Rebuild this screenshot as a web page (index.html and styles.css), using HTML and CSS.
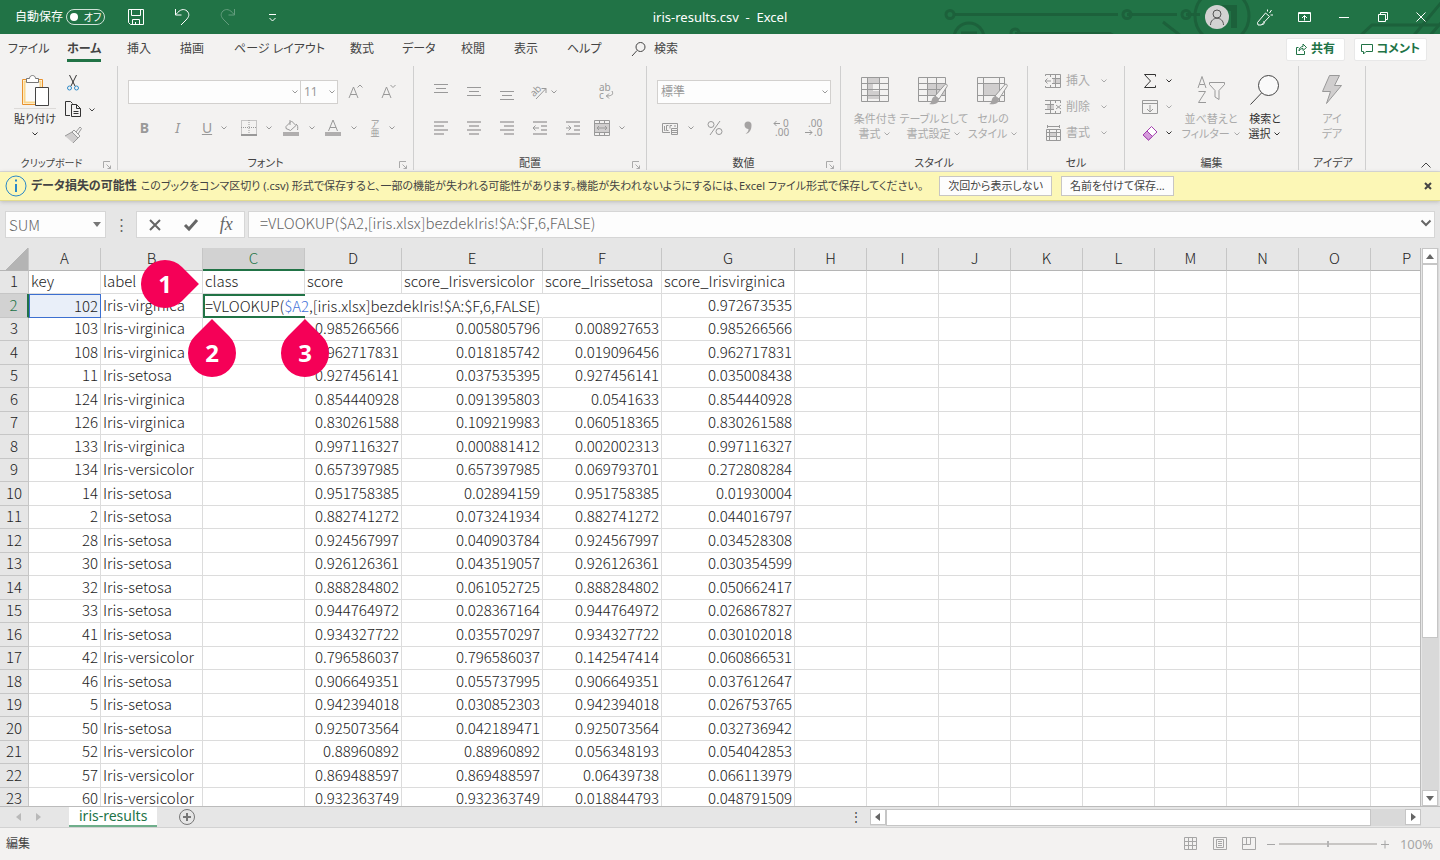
FILE: index.html
```html
<!DOCTYPE html>
<html lang="ja">
<head>
	<meta charset="utf-8">
	<meta name="viewport" content="width=device-width, initial-scale=1">
	<title>iris-results.csv - Excel</title>
	<link rel="stylesheet" href="styles.css">
</head>
<body>
	<svg class="sprite" aria-hidden="true">
		<symbol id="chev" viewBox="0 0 8 8"><path d="M1.500 2.500 4 5l2.500-2.500"/></symbol>
		<symbol id="launch" viewBox="0 0 9 9"><path d="M.5 7V.5H7M3.500 3.500l4 4M7.500 4.500v3h-3"/></symbol>
		<symbol id="brush" viewBox="0 0 20 22"><path class="paper" d="M7 13 17 1.500c1-1 3 0 2 2L11 16z"/><path class="fill" d="M1 21c4-1 1-6 6-8l4 3c0 5-6 6-10 5z"/></symbol>
	</svg>

	<header class="titlebar">
		<svg class="circuit" width="500" height="34" viewBox="0 0 500 34" aria-hidden="true">
			<path d="M14 14.500h164M187 14.500h50M246 14.500h14M75 33.500h95l12 7M223 22l18 14M420 36l12-11h68M486 40 530-10M470 40 510-8"/>
			<circle cx="10" cy="14.500" r="4"/><circle cx="187" cy="14.500" r="4"/><circle cx="246" cy="14.500" r="4"/><circle cx="75" cy="33" r="4"/>
			<circle cx="29" cy="38" r="15"/><path d="M21 33h16"/><circle cx="282" cy="16" r="27"/><path d="M282 8h12v20" stroke-width="6"/>
		</svg>
		<div class="quick">
			<span>自動保存</span>
			<button class="toggle" type="button"><i></i>オフ</button>
			<button type="button" aria-label="上書き保存"><svg width="18" height="18"><path d="M1.500 1.500h15v15h-13l-2-2zM4.500 1.500v6h9v-6M5.500 16.500v-5h7v5M8.500 14v2"/></svg></button>
			<button type="button" aria-label="元に戻す"><svg width="18" height="18"><path d="M2.500 1v6h6M3 6.500C7 1 11 .5 14 3c3 3 2 6-1 9l-5 5"/></svg></button>
			<button class="faded" type="button" aria-label="やり直し"><svg width="18" height="18"><path d="M15.500 1v6h-6M15 6.500C11 1 7 .5 4 3c-3 3-2 6 1 9l5 5"/></svg></button>
			<button type="button" aria-label="カスタマイズ"><svg width="18" height="18"><path d="M4 6.500h7M4.500 10l3 3 3-3"/></svg></button>
		</div>
		<div class="caption">iris-results.csv&nbsp; -&nbsp; Excel</div>
		<div class="window-tools">
			<button class="avatar" type="button" aria-label="アカウント"><svg width="24" height="24"><circle cx="12" cy="9" r="4"/><path d="M5.500 20c0-9 13-9 13 0"/></svg></button>
			<button type="button" aria-label="ペン"><svg width="18" height="18"><path d="M1.500 14.500 9.500 5l4 3.500-8 8.500H2zM5.500 16.500c4 0 3-3 2-3M11.500 3.500V1.500M13.500 5 15.500 2M14.500 7h2.500"/></svg></button>
			<button type="button" aria-label="リボンの表示"><svg width="18" height="18"><path d="M3.500 4.500h12v9h-12zM3.500 5.500h12M9.500 12.500v-5M7 10l2.500-2.500L12 10"/></svg></button>
			<button type="button" aria-label="最小化"><svg width="18" height="18"><path d="M5 9.500h10"/></svg></button>
			<button type="button" aria-label="元のサイズ"><svg width="18" height="18"><path d="M5.500 6.500h7v7h-7zM7.500 6V4.500h7v7H13"/></svg></button>
			<button type="button" aria-label="閉じる"><svg width="18" height="18"><path d="M4.500 4.500l9 9M13.500 4.500l-9 9"/></svg></button>
		</div>
	</header>

	<nav class="tabs">
		<div class="tab-list">
			<a href="#">ファイル</a>
			<a href="#" class="active">ホーム</a>
			<a href="#">挿入</a>
			<a href="#">描画</a>
			<a href="#">ページ レイアウト</a>
			<a href="#">数式</a>
			<a href="#">データ</a>
			<a href="#">校閲</a>
			<a href="#">表示</a>
			<a href="#">ヘルプ</a>
			<a href="#"><svg width="16" height="16"><circle cx="9.500" cy="6" r="4.500"/><path d="M6 9.500 1 15"/></svg>検索</a>
		</div>
		<button class="share" type="button"><svg width="12" height="12"><path d="M3.500 4.500h-2v7h8V8M4 8c0-3 2-4.500 4-4.500V1l3.500 3.500L8 7.500V5.500C6.500 5.500 5 6 4 8z"/></svg>共有</button>
		<button class="share" type="button"><svg width="12" height="12"><path d="M.5 1.500h11v7H5l-2.500 2.500V8.500h-2z"/></svg>コメント</button>
	</nav>

	<section class="ribbon">
		<div class="group clipboard">
			<div class="body">
				<button class="big on" type="button">
					<svg width="30" height="34"><path d="M2.500 5.500h20v25h-20z" fill="#fff" stroke="#e8912d"/><path d="M4.500 7.500h16v21h-16z" fill="#fafafa" stroke="#fad58a" stroke-width="2"/><path d="M6.500 8.500v-4h3c0-4 6-4 6 0h3v4z" fill="#fff" stroke="#777"/><path d="M15.500 13.500h13v18h-13z" fill="#fff"/></svg>
					<span>貼り付け</span>
					<svg class="chev"><use href="#chev"/></svg>
				</button>
				<div class="column">
					<button class="dark" type="button" aria-label="切り取り"><svg width="16" height="18"><path d="M4.500 1 10 12M11.500 1 6 12"/><circle cx="4.500" cy="14" r="2" stroke="#2e8bc9"/><circle cx="11.500" cy="14" r="2" stroke="#2e8bc9"/></svg></button>
					<button class="dark" type="button" aria-label="コピー"><svg width="18" height="18"><path d="M6 15.500H1.500v-14h5l2 2M7.500 4.500h5l4 4v8h-9zM12.500 4.500v4h4M9.500 11.500h5M9.500 13.500h5"/></svg></button>
					<button type="button" aria-label="書式のコピー"><svg width="18" height="18"><path class="soft" d="M1 10l7-4 6 6-5 5z"/><path d="M1 10l7-4 6 6-5 5M8 6l2-2 6 6-2 2M12 6l4-5 1.500 1.500L14 8"/></svg></button>
				</div>
				<svg class="chev copy-chev"><use href="#chev"/></svg>
			</div>
			<footer>クリップボード<svg class="launch"><use href="#launch"/></svg></footer>
		</div>

		<div class="group font">
			<div class="body">
				<div class="row">
					<label class="combo wide"><select aria-label="フォント"><option></option></select><svg class="chev"><use href="#chev"/></svg></label>
					<label class="combo size"><select aria-label="フォント サイズ"><option>11</option></select><svg class="chev"><use href="#chev"/></svg></label>
					<button class="tool" type="button" aria-label="拡大"><svg width="18" height="18"><path d="M3 15 7.500 4 12 15M4.500 11.500h6M11.500 4.500 14 2l2.500 2.500"/></svg></button>
					<button class="tool" type="button" aria-label="縮小"><svg width="18" height="18"><path d="M3 15 7.500 4 12 15M4.500 11.500h6M11.500 2 14 4.500 16.500 2"/></svg></button>
				</div>
				<div class="row">
					<button class="tool" type="button"><b>B</b></button>
					<button class="tool" type="button"><i>I</i></button>
					<button class="split" type="button"><u>U</u><svg class="chev"><use href="#chev"/></svg></button>
					<button class="split" type="button" aria-label="罫線"><svg width="16" height="16"><path stroke-dasharray="1 1" d="M.5.5h15v14H.5zM8 0v15M0 7.500h16"/><path d="M0 15h16" stroke-width="2"/></svg><svg class="chev"><use href="#chev"/></svg></button>
					<button class="split" type="button" aria-label="塗りつぶし"><svg width="18" height="18"><path d="M4 7.500 9.500 2l4.500 4.500-5.500 5-4.500-2zM8 1v5M14 5c2 1 2 4 1.500 6"/><path class="bar" d="M1 15h16"/></svg><svg class="chev"><use href="#chev"/></svg></button>
					<button class="split" type="button" aria-label="フォントの色"><svg width="18" height="18"><path d="M4.500 12 9 1l4.500 11M6 8.500h6"/><path class="bar" d="M1 15h16"/></svg><svg class="chev"><use href="#chev"/></svg></button>
					<button class="split" type="button"><span class="ruby">ア<br>亜</span><svg class="chev"><use href="#chev"/></svg></button>
				</div>
			</div>
			<footer>フォント<svg class="launch"><use href="#launch"/></svg></footer>
		</div>

		<div class="group align">
			<div class="body">
				<div class="row">
					<button class="tool" type="button" aria-label="上揃え"><svg width="16" height="16"><path d="M1 .5h14M3 4.500h10M1 8.500h14"/></svg></button>
					<button class="tool" type="button" aria-label="中央揃え"><svg width="16" height="16"><path d="M1 3.500h14M3 7.500h10M1 11.500h14"/></svg></button>
					<button class="tool" type="button" aria-label="下揃え"><svg width="16" height="16"><path d="M1 7.500h14M3 11.500h10M1 15.500h14"/></svg></button>
					<button class="split angle-tool" type="button"><svg width="18" height="18"><text x="0" y="11" transform="rotate(-45 6 8)">ab</text><path d="M6 16 16 5.500M11.500 5.500H16V10"/></svg><svg class="chev"><use href="#chev"/></svg></button>
					<button class="tool wrap-tool" type="button"><svg width="18" height="18"><text x="2" y="8">ab</text><text x="2" y="16">c</text><path d="M15 8c2 4-1 5-6 5M12 10.500 9.500 13l2.500 2.500"/></svg></button>
				</div>
				<div class="row">
					<button class="tool thick" type="button" aria-label="左揃え"><svg width="16" height="16"><path d="M1 2h14M1 6h10M1 10h14M1 14h10"/></svg></button>
					<button class="tool thick" type="button" aria-label="中央揃え"><svg width="16" height="16"><path d="M1 2h14M3 6h10M1 10h14M3 14h10"/></svg></button>
					<button class="tool thick" type="button" aria-label="右揃え"><svg width="16" height="16"><path d="M1 2h14M5 6h10M1 10h14M5 14h10"/></svg></button>
					<button class="tool thick" type="button" aria-label="インデント解除"><svg width="16" height="16"><path d="M1 2h14M9 6h6M9 10h6M1 14h14"/><path class="thin" d="M1 8h6M3.500 5.500 1 8l2.500 2.500"/></svg></button>
					<button class="tool thick" type="button" aria-label="インデント"><svg width="16" height="16"><path d="M1 2h14M9 6h6M9 10h6M1 14h14"/><path class="thin" d="M1 8h5M3.500 5.500 6 8l-2.500 2.500"/></svg></button>
					<button class="split" type="button" aria-label="セルを結合"><svg width="16" height="16"><path class="soft" d="M1 4h14v8H1z"/><path d="M.5.5h15v15H.5zM.5 3.500h15M.5 12.500h15M5.500.5v3M10.500.5v3M5.500 12.500v3M10.500 12.500v3M3 8h10M5 6 3 8l2 2M11 6l2 2-2 2"/></svg><svg class="chev"><use href="#chev"/></svg></button>
				</div>
			</div>
			<footer>配置<svg class="launch"><use href="#launch"/></svg></footer>
		</div>

		<div class="group number">
			<div class="body">
				<div class="row">
					<label class="combo format"><select aria-label="表示形式"><option>標準</option></select><svg class="chev"><use href="#chev"/></svg></label>
				</div>
				<div class="row">
					<button class="split" type="button" aria-label="通貨"><svg width="18" height="16"><path d="M9 12.500H1.500v-9h15V8M3.500 6v4.500h1M7.500 5.500h-2v5h2M11 5.500H9v3M13 6h2"/><path class="paper" d="M10.500 8.500h6v6h-6zM10.500 10.500h6M10.500 12.500h6"/></svg><svg class="chev"><use href="#chev"/></svg></button>
					<button class="tool" type="button" aria-label="パーセント"><svg width="18" height="18"><circle cx="5" cy="5.500" r="3"/><circle cx="13" cy="12.500" r="3"/><path d="M14 2 4 16"/></svg></button>
					<button class="tool" type="button" aria-label="桁区切り"><svg width="16" height="16"><path class="fill" d="M4.500 5a3.500 3.500 0 1 1 7 0c0 5-2 8-6 9 2-1.500 3-3 3-5-2 0-4-1.500-4-4z"/></svg></button>
					<button class="tool" type="button"><svg width="18" height="18"><path d="M8 4.500H2M4.500 2 2 4.500 4.500 7"/><text x="11" y="8">0</text><text x="3" y="17">.00</text></svg></button>
					<button class="tool" type="button"><svg width="18" height="18"><path d="M0 13.500h7M4.500 11 7 13.500 4.500 16"/><text x="3" y="8">.00</text><text x="9" y="17">.0</text></svg></button>
				</div>
			</div>
			<footer>数値<svg class="launch"><use href="#launch"/></svg></footer>
		</div>

		<div class="group styles">
			<div class="body">
				<button class="big" type="button"><svg width="30" height="32"><path class="soft" d="M7 3h12v6H7zM7 9h6v8H7zM7 17h12v8H7z"/><path d="M1.500 3.500h27v24h-27zM1.500 9.500h27M1.500 15.500h27M1.500 21.500h27M7.500 3.500v24M19.500 3.500v24"/></svg><span>条件付き<br>書式 <svg class="chev"><use href="#chev"/></svg></span></button>
				<button class="big" type="button"><svg width="34" height="32"><path class="soft" d="M10 9h19v12H10z"/><path d="M1.500 3.500h27v24h-27zM1.500 9.500h27M1.500 15.500h27M1.500 21.500h27M10.500 3.500v24M19.500 3.500v24"/><use href="#brush" x="11" y="9" width="20" height="22"/></svg><span>テーブルとして<br>書式設定 <svg class="chev"><use href="#chev"/></svg></span></button>
				<button class="big" type="button"><svg width="34" height="32"><path class="soft" d="M7 9h16v12H7z"/><path d="M1.500 3.500h27v24h-27zM1.500 9.500h27M1.500 21.500h27M7.500 3.500v24M23.500 3.500v24"/><use href="#brush" x="12" y="9" width="20" height="22"/></svg><span>セルの<br>スタイル <svg class="chev"><use href="#chev"/></svg></span></button>
			</div>
			<footer>スタイル</footer>
		</div>

		<div class="group cells">
			<div class="body">
				<button class="line" type="button"><svg width="18" height="16"><path class="soft" d="M9 5h7v6H9z"/><path d="M1.500 3V1.500h15v13h-15V13M6.500 1.500V4M11.500 1.500v13M8 5.500h8M8 10.500h8M1 8h6M3.500 5.500 1 8l2.500 2.500M6.500 12v2"/></svg>挿入<svg class="chev"><use href="#chev"/></svg></button>
				<button class="line" type="button"><svg width="18" height="16"><path class="soft" d="M3 5h7v6H3z"/><path d="M1 1.500h15.500V4M1 14.500h15.500V12M1 5.500h9M1 10.500h9M6.500 1.500v13M11.500 1.500V4M11.500 12v2M12 6l5 4M17 6l-5 4"/></svg>削除<svg class="chev"><use href="#chev"/></svg></button>
				<button class="line" type="button"><svg width="18" height="16"><path class="soft" d="M5 7h8v5H5z"/><path d="M2.500 4.500h14v11h-14zM2.500 7.500h14M2.500 11.500h14M5.500 4.500v11M12.500 4.500v11M4 1.500h11M3.500 0v3M15.500 0v3"/></svg>書式<svg class="chev"><use href="#chev"/></svg></button>
			</div>
			<footer>セル</footer>
		</div>

		<div class="group edit">
			<div class="body">
				<div class="column">
					<button class="line dark" type="button" aria-label="合計"><svg width="16" height="16"><path d="M13.500 3.500v-2H2.500l6 6.500-6 6.500h11v-2"/></svg><svg class="chev"><use href="#chev"/></svg></button>
					<button class="line" type="button" aria-label="フィル"><svg width="16" height="16"><path d="M.5 1.500h15v13H.5zM.5 4.500h15M8 6v7M5 10l3 3 3-3"/></svg><svg class="chev"><use href="#chev"/></svg></button>
					<button class="line dark" type="button" aria-label="クリア"><svg width="16" height="16"><path d="M1 10 9.500 1.500 15 7l-8.500 8z" fill="#fff" stroke="#a33fae"/><path d="M1 10l4-4 5.500 5.500-4 3.500z" fill="#d59bdb" stroke="#a33fae"/></svg><svg class="chev"><use href="#chev"/></svg></button>
				</div>
				<button class="big" type="button"><svg width="32" height="32"><path d="M3 14 7 2.500 11 14M4.500 10.500h5M3.500 17.500h7l-7 11h7.500M14.500 8.500h15v2l-5.500 6v9l-4-2.500v-6.500l-5.500-6z"/></svg><span>並べ替えと<br>フィルター <svg class="chev"><use href="#chev"/></svg></span></button>
				<button class="big on" type="button"><svg width="32" height="32"><circle cx="19.500" cy="11.500" r="10" fill="#fafafa"/><path d="M12.500 19 1.500 30.500"/></svg><span>検索と<br>選択 <svg class="chev"><use href="#chev"/></svg></span></button>
			</div>
			<footer>編集</footer>
		</div>

		<div class="group ideas">
			<div class="body">
				<button class="big" type="button"><svg width="24" height="32"><path class="soft" d="M9.500 1.500h10l-5 10h7l-15 18 4-12h-8z"/><path d="M9.500 1.500h10l-5 10h7l-15 18 4-12h-8z"/></svg><span>アイ<br>デア</span></button>
			</div>
			<footer>アイデア</footer>
		</div>
		<button class="collapse" type="button" aria-label="リボンを折りたたむ"><svg width="12" height="8"><path d="M1.500 6.500 6 2l4.500 4.500"/></svg></button>
	</section>

	<div class="message">
		<svg width="22" height="22"><circle cx="11" cy="11" r="10"/><path d="M11 9v8M11 4.500v2" stroke-width="2"/></svg>
		<strong>データ損失の可能性</strong>
		<p>このブックをコンマ区切り (.csv) 形式で保存すると、一部の機能が失われる可能性があります。機能が失われないようにするには、Excel ファイル形式で保存してください。</p>
		<button type="button">次回から表示しない</button>
		<button type="button">名前を付けて保存...</button>
		<button class="dismiss" type="button" aria-label="閉じる"><svg width="8" height="8"><path d="M1 1l6 6M7 1 1 7"/></svg></button>
	</div>

	<div class="formula-bar">
		<label class="name-box"><input value="SUM" aria-label="名前ボックス"><svg width="8" height="5"><path d="M0 0h8L4 5z"/></svg></label>
		<span class="grip">⋮</span>
		<div class="entry">
			<button type="button" aria-label="キャンセル"><svg width="14" height="14"><path d="M2 2l10 10M12 2 2 12"/></svg></button>
			<button type="button" aria-label="入力"><svg width="16" height="14"><path stroke-width="3" d="M2 7l4 4 8-9"/></svg></button>
			<button class="fx" type="button">fx</button>
		</div>
		<label class="formula"><input value="=VLOOKUP($A2,[iris.xlsx]bezdekIris!$A:$F,6,FALSE)" aria-label="数式バー"><svg width="12" height="8"><path d="M1.500 1.500 6 6l4.500-4.500"/></svg></label>
	</div>

	<main class="sheet">
		<div class="cells-area">
			<table>
				<colgroup><col class="c-head"><col class="c-a"><col class="c-b"><col class="c-c"><col class="c-d"><col class="c-e"><col class="c-f"><col class="c-g"><col span="9" class="c-rest"></colgroup>
				<thead><tr id="letters"></tr></thead>
				<tbody id="rows"></tbody>
			</table>
			<span class="pin pin-right">1</span>
			<span class="pin pin-cell">2</span>
			<span class="pin pin-handle">3</span>
		</div>
		<div class="vscroll">
			<button type="button" aria-label="上へ"><svg width="8" height="5"><path d="M0 5h8L4 0z"/></svg></button>
			<i></i>
			<button type="button" aria-label="下へ"><svg width="8" height="5"><path d="M0 0h8L4 5z"/></svg></button>
		</div>
	</main>

	<div class="sheet-tabs">
		<button class="step" type="button" aria-label="前のシート"><svg width="5" height="8"><path d="M5 0v8L0 4z"/></svg></button>
		<button class="step" type="button" aria-label="次のシート"><svg width="5" height="8"><path d="M0 0v8l5-4z"/></svg></button>
		<a href="#">iris-results</a>
		<button class="add" type="button" aria-label="新しいシート"><svg width="18" height="18"><circle cx="9" cy="9" r="7.500"/><path d="M9 5v8M5 9h8" stroke-width="2"/></svg></button>
		<span class="grip">⋮</span>
		<div class="hscroll">
			<button type="button" aria-label="左へ"><svg width="5" height="8"><path d="M5 0v8L0 4z"/></svg></button>
			<i></i>
			<button type="button" aria-label="右へ"><svg width="5" height="8"><path d="M0 0v8l5-4z"/></svg></button>
		</div>
	</div>

	<footer class="status">
		<span>編集</span>
		<button type="button" aria-label="標準"><svg width="14" height="14"><path d="M.5.5h12v12H.5zM4.500.5v12M8.500.5v12M.5 4.500h12M.5 8.500h12"/></svg></button>
		<button type="button" aria-label="ページ レイアウト"><svg width="14" height="14"><path d="M.5.5h13v12H.5zM3.500 2.500h7v8h-7zM5 4.500h4M5 6.500h4M5 8.500h4"/></svg></button>
		<button type="button" aria-label="改ページ プレビュー"><svg width="14" height="14"><path d="M.5.5h13v12H.5zM4.500.5v7M8.500.5v7M.5 7.500h8"/></svg></button>
		<div class="zoom">
			<svg width="8" height="9"><path d="M0 4.500h8"/></svg>
			<input type="range" min="10" max="190" value="100" aria-label="ズーム">
			<svg width="8" height="9"><path d="M0 4.500h8M4 .5v8"/></svg>
		</div>
		<span class="percent">100%</span>
	</footer>
	<script src="script.js"></script>
</body>
</html>
```
FILE: styles.css
```css
*{
	box-sizing: border-box;
	margin: 0;
}
body{
	display: flex;
	flex-direction: column;
	height: 100vh;
	overflow: hidden;
	background: #e6e6e6;
	color: #444;
	font: 12px/16px "Noto Sans", "Noto Sans CJK JP", sans-serif;
	font-feature-settings: "palt";
}
button, input, select{
	padding: 0;
	border: 0;
	border-radius: 0;
	background: none;
	color: inherit;
	font: inherit;
	font-feature-settings: inherit;
}
button{
	display: flex;
	align-items: center;
	justify-content: center;
	white-space: nowrap;
}
a{
	color: inherit;
	text-decoration: none;
}
svg{
	flex: none;
	overflow: visible;
	fill: none;
	stroke: currentColor;
}
.sprite{
	position: absolute;
	width: 0;
	height: 0;
}
.chev{
	width: 8px;
	height: 8px;
}
.launch{
	width: 9px;
	height: 9px;
}

/* title bar */
.titlebar{
	position: relative;
	display: grid;
	grid-template-columns: 1fr auto 1fr;
	align-items: center;
	flex: none;
	height: 34px;
	overflow: hidden;
	background: #217346;
	color: #fff;
}
.circuit{
	position: absolute;
	right: 0;
	top: 0;
	color: #1c613b;
	stroke-width: 3;
}
.quick{
	display: flex;
	align-items: center;
	padding-left: 15px;
}
.quick span{
	width: 51px;
	white-space: nowrap;
}
.quick button{
	width: 46px;
}
.quick .toggle{
	gap: 6px;
	width: 39px;
	height: 16px;
	margin-right: 8px;
	border: 1px solid #d0e2d8;
	border-radius: 8px;
	font-size: 10px;
}
.toggle i{
	width: 8px;
	height: 8px;
	border-radius: 50%;
	background: #fff;
}
.faded{
	opacity: .3;
}
.caption{
	font-size: 13px;
}
.window-tools{
	position: relative;
	display: flex;
	align-items: center;
	justify-content: flex-end;
}
.window-tools button{
	width: 39px;
}
.window-tools .avatar{
	width: 24px;
	height: 24px;
	margin-right: 16px;
	border-radius: 50%;
	background: #d2d2d2;
	color: #555;
}

/* ribbon tabs */
.tabs{
	display: flex;
	align-items: center;
	gap: 9px;
	flex: none;
	height: 32px;
	padding: 0 13px 2px 8px;
	background: #f3f2f1;
}
.tab-list{
	display: grid;
	grid-template-columns: 59px 60px 53px 54px 116px 52px 59px 53px 53px 64px 60px;
	flex: 1;
}
.tab-list a{
	display: flex;
	align-items: center;
	justify-self: start;
	gap: 7px;
	height: 26px;
	white-space: nowrap;
}
.tab-list .active{
	border-bottom: 3px solid #217346;
	padding-top: 3px;
	font-weight: bold;
}
.share{
	gap: 4px;
	height: 23px;
	min-width: 59px;
	padding: 0 6px;
	border: 1px solid #e8e8e8;
	border-radius: 2px;
	background: #fff;
	color: #217346;
	font-weight: bold;
}

/* ribbon */
.ribbon{
	display: flex;
	flex: none;
	height: 106px;
	border-bottom: 1px solid #d8d8d8;
	background: #f3f2f1;
}
.group{
	display: flex;
	flex-direction: column;
	flex: none;
	margin-bottom: 1px;
	border-right: 1px solid #cfcfcf;
}
.group footer{
	display: grid;
	grid-template-columns: 14px 1fr 14px;
	height: 16px;
	text-align: center;
	font-size: 11px;
	line-height: 18px;
	white-space: nowrap;
}
.group footer::before{
	content: "";
}
.group .body{
	flex: 1;
	color: #999;
}
.launch{
	align-self: center;
	margin-top: 4px;
	color: #aaa;
}
.clipboard{ width: 118px; }
.font{ width: 296px; }
.align{ width: 233px; }
.number{ width: 194px; }
.styles{ width: 187px; }
.cells{ width: 97px; }
.edit{ width: 174px; }
.ideas{ width: 67px; }
.clipboard .body, .styles .body, .edit .body, .ideas .body{
	display: flex;
}
.clipboard footer{
	grid-template-columns: 0 1fr 14px;
	font-size: 10px;
}
.ideas .body{
	justify-content: center;
}
.clipboard .body, .font .body, .align .body, .number .body{
	padding-left: 10px;
}
.styles .body{
	padding-left: 7px;
}
.row{
	display: flex;
	align-items: center;
	height: 24px;
	margin-top: 14px;
}
.row + .row{
	margin-top: 12px;
}
.tool{
	width: 33px;
	height: 24px;
	font-size: 14px;
}
.split{
	width: 42px;
	height: 24px;
	gap: 8px;
	font-size: 14px;
}
.number .split{
	width: 41px;
}
.ruby{
	font-size: 9px;
	line-height: 9px;
}
.row text{
	fill: currentColor;
	stroke: none;
	font-size: 10px;
}
.angle-tool{
	gap: 2px;
}
.wrap-tool{
	margin-left: 24px;
}
.bar{
	stroke: #b0aeae;
	stroke-width: 4;
}
.thick{
	color: #b9b7b7;
	stroke-width: 2;
}
.thin{
	stroke: #999;
	stroke-width: 1;
}
.soft{
	fill: #d0cece;
	stroke: none;
}
.fill{
	fill: #a5a3a3;
	stroke: none;
}
.paper{
	fill: #f3f2f1;
}
.combo{
	display: grid;
	align-items: center;
	height: 24px;
	border: 1px solid #d2d0ce;
	background: #fdfdfd;
}
.combo select{
	grid-area: 1 / 1;
	height: 22px;
	padding-left: 3px;
	appearance: none;
	color: #999;
}
.combo .chev{
	grid-area: 1 / 1;
	justify-self: end;
	margin-right: 1px;
	pointer-events: none;
}
.wide{
	width: 173px;
}
.size{
	width: 38px;
	margin-left: -1px;
}
.format{
	width: 174px;
}
.column{
	padding-top: 4px;
}
.column button{
	width: 26px;
	height: 26px;
}
.copy-chev{
	align-self: center;
	margin: 0 0 0 2px;
	color: #444;
}
.dark, .big.on{
	color: #333;
}
.big{
	flex-direction: column;
	justify-content: flex-start;
	padding-top: 8px;
	width: 54px;
	color: #aaa;
	font-size: 11px;
	line-height: 15px;
}
.big > svg:first-child{
	color: #999;
	margin-bottom: 5px;
}
.big.on > svg:first-child{
	color: #444;
}
.clipboard .big{
	width: 50px;
}
.clipboard .big > svg:first-child{
	margin-bottom: 0;
}
.clipboard .big span{
	margin-bottom: 4px;
	border-top: 1px solid #dcdad8;
	padding-top: 2px;
}
.styles .big:nth-child(2){
	width: 64px;
}
.line{
	justify-content: flex-start;
	gap: 4px;
	height: 26px;
	color: #aaa;
}
.line.dark{
	color: #333;
}
.line > svg:first-child{
	color: #999;
}
.line.dark > svg:first-child{
	color: #333;
}
.cells .line .chev{
	margin-left: 6px;
}
.cells .body{
	padding: 2px 0 0 16px;
}
.edit .column{
	padding: 2px 0 0 17px;
}
.edit .column button{
	gap: 7px;
	width: 40px;
}
.edit .big{
	width: 58px;
}
.edit .big.on{
	width: 50px;
}
.collapse{
	align-self: flex-end;
	margin: 0 8px 2px auto;
}

/* message bar */
.message{
	z-index: 1;
	display: flex;
	align-items: center;
	gap: 4px;
	flex: none;
	height: 29px;
	padding: 0 8px 0 5px;
	border-bottom: 1px solid #e3dc8e;
	background: #fcf7b6;
	box-shadow: 0 1px 4px #bbb;
	font-size: 11px;
	white-space: nowrap;
}
.message > svg{
	color: #2b88c8;
}
.message strong{
	font-size: 12px;
}
.message p{
	margin-right: 12px;
}
.message button{
	height: 20px;
	margin-right: 5px;
	padding: 0 8px;
	border: 1px solid #c8c6c4;
	background: #fdfdfd;
}
.message .dismiss{
	margin: 0 0 0 auto;
	padding: 0;
	border: 0;
	background: none;
	stroke-width: 2;
}

/* formula bar */
.formula-bar{
	display: flex;
	flex: none;
	height: 47px;
	padding: 10px 5px 10px;
	color: #666;
	font: 15px/20px "Noto Sans CJK JP", sans-serif;
	font-weight: 300;
}
.name-box, .formula, .entry{
	display: flex;
	align-items: center;
	border: 1px solid #d6d6d6;
	background: #fdfdfd;
}
.name-box{
	width: 101px;
	padding: 0 4px 0 3px;
}
.name-box input, .formula input{
	flex: 1;
	min-width: 0;
	font-weight: 300;
}
.name-box path{
	fill: #777;
	stroke: none;
}
.formula-bar .grip{
	width: 30px;
	text-align: center;
	line-height: 26px;
}
.entry{
	width: 109px;
}
.entry button{
	width: 36px;
	stroke-width: 2;
}
.entry .fx{
	font: italic 18px "Liberation Serif", serif;
}
.formula{
	flex: 1;
	margin-left: 3px;
	padding: 0 2px 3px 11px;
	stroke-width: 2;
}

/* grid */
.sheet{
	display: flex;
	flex: 1;
	min-height: 0;
	border-bottom: 1px solid #bbb;
}
.cells-area{
	position: relative;
	flex: 1;
	overflow: hidden;
	border-right: 1px solid #bbb;
	background: #fff;
}
table{
	table-layout: fixed;
	width: 1443px;
	border-spacing: 0;
	color: #222;
	font: 15px/20px "Noto Sans CJK JP", sans-serif;
	font-weight: 300;
}
.c-head{ width: 29px; }
.c-a, .c-rest{ width: 72px; }
.c-b, .c-c{ width: 102px; }
.c-d{ width: 97px; }
.c-e{ width: 141px; }
.c-f{ width: 119px; }
.c-g{ width: 133px; }
th, td{
	height: 23px;
	padding: 0 2px 2px;
	border-right: 1px solid #dcdcdc;
	border-bottom: 1px solid #dcdcdc;
	white-space: nowrap;
}
tbody tr:nth-child(even) > *{
	height: 24px;
}
th{
	border-color: #c6c6c6;
	background: #e6e6e6;
	font-weight: 300;
	text-align: center;
}
tbody th{
	padding: 0 0 2px;
}
thead th{
	border-bottom-color: #b5b5b5;
}
thead th:first-child{
	background: linear-gradient(135deg, #e6e6e6 55%, #b4b4b4 55%);
}
.picked{
	background: #d2d2d2;
	color: #217346;
}
thead .picked{
	border-bottom: 2px solid #217346;
	padding-bottom: 1px;
}
tbody .picked{
	border-right: 2px solid #217346;
}
.num{
	text-align: right;
}
.source{
	border: 1px solid #3c6fd0;
	padding-bottom: 1px;
	background: #e9eff9;
}
.editing{
	border: 2px solid #217346;
	border-right: 0;
	padding: 0;
	overflow: visible;
}
.editing span{
	color: #4472d8;
}
.covered{
	border-right-color: transparent;
}
.pin{
	position: absolute;
	z-index: 0;
	width: 48px;
	color: #fff;
	font: bold 24px/48px "Noto Sans", sans-serif;
	text-align: center;
}
.pin::before{
	content: "";
	position: absolute;
	inset: 0;
	z-index: -1;
	border-radius: 50% 0 50% 50%;
	background: #f50057;
	transform: rotate(-45deg);
}
.pin-right::before{
	transform: rotate(45deg);
}
.pin-right{
	left: 141px;
	top: 12px;
}
.pin-cell{
	left: 188px;
	top: 81px;
}
.pin-handle{
	left: 281px;
	top: 81px;
}

/* scroll bars */
.vscroll{
	display: flex;
	flex-direction: column;
	width: 17px;
	margin: 0 1px;
	background: #d9d9d9;
}
.vscroll button, .hscroll button{
	flex: none;
	width: 16px;
	height: 16px;
	border: 1px solid #c6c6c6;
	background: #fff;
}
.vscroll path, .hscroll path, .step path{
	fill: #666;
	stroke: none;
}
.vscroll i{
	height: 67%;
	margin-right: 1px;
	border: 1px solid #c6c6c6;
	background: #fff;
}
.vscroll button:last-child{
	margin-top: auto;
}

/* sheet tabs */
.sheet-tabs{
	display: flex;
	align-items: center;
	flex: none;
	height: 21px;
	padding: 0 19px 0 8px;
	border-bottom: 1px solid #d2d2d2;
}
.step{
	width: 20px;
	opacity: .35;
}
.sheet-tabs a{
	height: 20px;
	margin: -1px 0 0 21px;
	padding: 0 10px;
	border-bottom: 2px solid #6fae8b;
	background: #fff;
	color: #217346;
	font-size: 14px;
	line-height: 18px;
}
.add{
	margin-left: 21px;
	color: #777;
}
.sheet-tabs .grip{
	margin-left: auto;
	margin-right: 8px;
}
.hscroll{
	display: flex;
	width: 39%;
	height: 17px;
	background: #d9d9d9;
}
.hscroll i{
	width: 88%;
	border: 1px solid #c6c6c6;
	background: #fff;
}
.hscroll button:last-child{
	margin-left: auto;
}

/* status bar */
.status{
	display: flex;
	align-items: center;
	gap: 15px;
	flex: none;
	height: 32px;
	padding: 0 7px 0 6px;
	background: #f3f2f1;
	color: #a6a6a6;
}
.status span:first-child{
	flex: 1;
	color: #444;
}
.zoom{
	display: flex;
	align-items: center;
	gap: 4px;
	margin: 0 -4px 0 -4px;
}
.zoom input{
	width: 98px;
	height: 10px;
	appearance: none;
	background: linear-gradient(#c8c6c4, #c8c6c4) center / 100% 2px no-repeat;
}
.zoom input::-webkit-slider-thumb{
	appearance: none;
	width: 2px;
	height: 6px;
	background: #b5b5b5;
}
.status .percent{
	font-size: 13px;
}
```
FILE: script.js
```js
const letters = "ABCDEFGHIJKLMNOP".split("");
const data = [
	["key", "label", "class", "score", "score_Irisversicolor", "score_Irissetosa", "score_Irisvirginica"],
	["102", "Iris-virginica", "", "", "", "", "0.972673535"],
	["103", "Iris-virginica", "", "0.985266566", "0.005805796", "0.008927653", "0.985266566"],
	["108", "Iris-virginica", "", "0.962717831", "0.018185742", "0.019096456", "0.962717831"],
	["11", "Iris-setosa", "", "0.927456141", "0.037535395", "0.927456141", "0.035008438"],
	["124", "Iris-virginica", "", "0.854440928", "0.091395803", "0.0541633", "0.854440928"],
	["126", "Iris-virginica", "", "0.830261588", "0.109219983", "0.060518365", "0.830261588"],
	["133", "Iris-virginica", "", "0.997116327", "0.000881412", "0.002002313", "0.997116327"],
	["134", "Iris-versicolor", "", "0.657397985", "0.657397985", "0.069793701", "0.272808284"],
	["14", "Iris-setosa", "", "0.951758385", "0.02894159", "0.951758385", "0.01930004"],
	["2", "Iris-setosa", "", "0.882741272", "0.073241934", "0.882741272", "0.044016797"],
	["28", "Iris-setosa", "", "0.924567997", "0.040903784", "0.924567997", "0.034528308"],
	["30", "Iris-setosa", "", "0.926126361", "0.043519057", "0.926126361", "0.030354599"],
	["32", "Iris-setosa", "", "0.888284802", "0.061052725", "0.888284802", "0.050662417"],
	["33", "Iris-setosa", "", "0.944764972", "0.028367164", "0.944764972", "0.026867827"],
	["41", "Iris-setosa", "", "0.934327722", "0.035570297", "0.934327722", "0.030102018"],
	["42", "Iris-versicolor", "", "0.796586037", "0.796586037", "0.142547414", "0.060866531"],
	["46", "Iris-setosa", "", "0.906649351", "0.055737995", "0.906649351", "0.037612647"],
	["5", "Iris-setosa", "", "0.942394018", "0.030852303", "0.942394018", "0.026753765"],
	["50", "Iris-setosa", "", "0.925073564", "0.042189471", "0.925073564", "0.032736942"],
	["52", "Iris-versicolor", "", "0.88960892", "0.88960892", "0.056348193", "0.054042853"],
	["57", "Iris-versicolor", "", "0.869488597", "0.869488597", "0.06439738", "0.066113979"],
	["60", "Iris-versicolor", "", "0.932363749", "0.932363749", "0.018844793", "0.048791509"]
];

document.getElementById("letters").innerHTML = "<th></th>" + letters.map(function(letter){
	return "<th" + (letter == "C" ? " class='picked'" : "") + ">" + letter + "</th>";
}).join("");

document.getElementById("rows").innerHTML = data.map(function(row, r){
	let html = "<th" + (r == 1 ? " class='picked'" : "") + ">" + (r + 1) + "</th>";
	for(let c = 0; c < letters.length; c++){
		let value = row[c] || "";
		let names = [];
		if(value !== "" && !isNaN(value))
			names.push("num");
		if(r == 1 && c == 0)
			names.push("source");
		if(r == 1 && c == 2){
			names.push("editing");
			value = "=VLOOKUP(<span>$A2</span>,[iris.xlsx]bezdekIris!$A:$F,6,FALSE)";
		}
		if(r == 1 && (c == 3 || c == 4))
			names.push("covered");
		html += "<td class='" + names.join(" ") + "'>" + value + "</td>";
	}
	return "<tr>" + html + "</tr>";
}).join("");
```
